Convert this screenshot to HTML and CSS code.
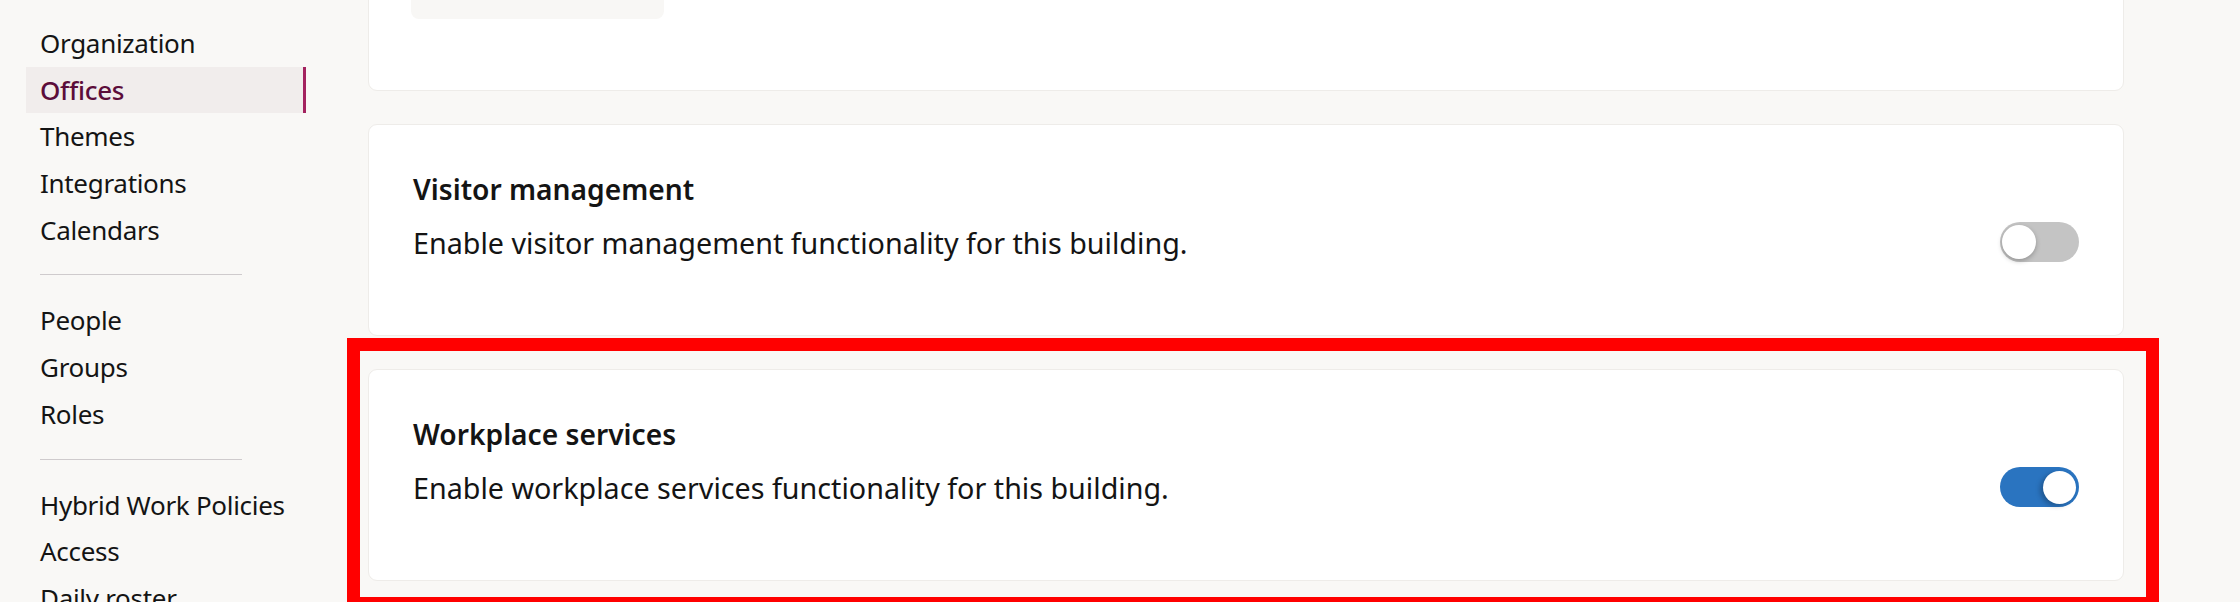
FILE: index.html
```html
<!DOCTYPE html>
<html lang="en">
<head>
    <meta charset="UTF-8">
    <title>Settings - Offices</title>
    <link rel="stylesheet" href="styles.css">
</head>
<body>
  <div class="layout">
      <nav class="sidebar">
          <a class="nav-item">Organization</a>
          <a class="nav-item active">Offices</a>
          <a class="nav-item">Themes</a>
          <a class="nav-item">Integrations</a>
          <a class="nav-item">Calendars</a>
          <hr class="nav-divider">
          <a class="nav-item">People</a>
          <a class="nav-item">Groups</a>
          <a class="nav-item">Roles</a>
          <hr class="nav-divider">
          <a class="nav-item">Hybrid Work Policies</a>
          <a class="nav-item">Access</a>
          <a class="nav-item">Daily roster</a>
      </nav>

      <main class="content">
          <section class="card card-top">
              <div class="field"></div>
          </section>

          <section class="card">
              <h3 class="card-title">Visitor management</h3>
              <div class="setting-row">
                  <p class="setting-text">Enable visitor management functionality for this building.</p>
                  <span class="toggle"><span class="knob"></span></span>
              </div>
          </section>

          <section class="card highlighted">
              <h3 class="card-title">Workplace services</h3>
              <div class="setting-row">
                  <p class="setting-text">Enable workplace services functionality for this building.</p>
                  <span class="toggle on"><span class="knob"></span></span>
              </div>
              <div class="red-frame"></div>
          </section>
      </main>
  </div>
</body>
</html>
```
FILE: styles.css
```css
                                /*General Style*/

*
{
    box-sizing: border-box;
    margin: 0;
    padding: 0;
    font-family: "Noto Sans", "Liberation Sans", sans-serif;
    color: #141414;
}
body
{
    background-color: #f9f8f6;
    overflow: hidden;
}
.layout
{
    display: flex;
    align-items: flex-start;
}

                                /*SIDEBAR*/

.sidebar
{
    flex-shrink: 0;
    width: 306px;
    padding: 20px 0 0 26px;
    display: flex;
    flex-direction: column;
}
.nav-item
{
    display: block;
    height: 46.7px;
    line-height: 46.7px;
    padding-left: 14px;
    font-size: 26px;
    letter-spacing: -0.3px;
    text-decoration: none;
}
.nav-item.active
{
    background-color: #f1edec;
    border-right: 3px solid #a3225f;
    color: #5c0d3a;
    font-weight: 500;
}
.nav-divider
{
    width: 202px;
    margin: 21px 0 22px 14px;
    border: none;
    border-top: 1px solid #cfcbcd;
}

                                /*CARDS*/

.content
{
    width: 1756px;
    margin: -74px 0 0 62px;
    display: flex;
    flex-direction: column;
    gap: 33px;
}
.card
{
    position: relative;
    background-color: white;
    border: 1px solid #eeece9;
    border-radius: 9px;
    padding: 45px 44px 73px;
}
.card-top
{
    padding: 44px 42px 71px;
}
.field
{
    width: 253px;
    height: 48px;
    background-color: #f8f7f5;
    border-radius: 8px;
}
.card-title
{
    font-size: 28.2px;
    line-height: 38px;
    font-weight: 600;
    margin-bottom: 14px;
}
.setting-row
{
    display: flex;
    align-items: center;
    justify-content: space-between;
    height: 40px;
}
.setting-text
{
    font-size: 28.7px;
}

                                /*TOGGLE*/

.toggle
{
    position: relative;
    width: 79px;
    height: 40px;
    border-radius: 20px;
    background-color: #c4c4c4;
}
.knob
{
    position: absolute;
    top: 3px;
    left: 2px;
    width: 34px;
    height: 34px;
    border-radius: 50%;
    background-color: white;
    box-shadow: 0 2px 5px rgba(0, 0, 0, 0.25);
}
.toggle.on
{
    background-color: #2a74c0;
}
.toggle.on .knob
{
    left: auto;
    right: 3px;
    width: 33px;
    height: 33px;
    top: 3.5px;
    box-shadow: -3px 2px 5px rgba(0, 0, 0, 0.25);
}

                                /*ANNOTATION*/

.red-frame
{
    position: absolute;
    top: -32px;
    left: -22px;
    right: -36px;
    bottom: -30px;
    border: 13px solid #ff0000;
    pointer-events: none;
}
```
